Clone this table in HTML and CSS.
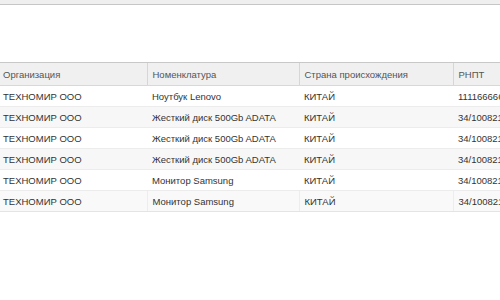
FILE: index.html
```html
<!DOCTYPE html>
<html lang="ru">
<head>
  <meta charset="UTF-8">
  <title>Номенклатура</title>
  <link rel="stylesheet" href="styles.css">
</head>
<body>

<div class="toolbar"></div>

<div class="grid-wrap">
  <table class="grid">
    <colgroup>
      <col class="c-org">
      <col class="c-item">
      <col class="c-country">
      <col class="c-rnpt">
    </colgroup>
    <thead>
      <tr>
        <th>Организация</th>
        <th>Номенклатура</th>
        <th>Страна происхождения</th>
        <th>РНПТ</th>
      </tr>
    </thead>
    <tbody>
      <tr>
        <td>ТЕХНОМИР ООО</td>
        <td>Ноутбук Lenovo</td>
        <td>КИТАЙ</td>
        <td>1111666666</td>
      </tr>
      <tr class="alt">
        <td>ТЕХНОМИР ООО</td>
        <td>Жесткий диск 500Gb ADATA</td>
        <td>КИТАЙ</td>
        <td>34/10082100</td>
      </tr>
      <tr>
        <td>ТЕХНОМИР ООО</td>
        <td>Жесткий диск 500Gb ADATA</td>
        <td>КИТАЙ</td>
        <td>34/10082100</td>
      </tr>
      <tr class="alt">
        <td>ТЕХНОМИР ООО</td>
        <td>Жесткий диск 500Gb ADATA</td>
        <td>КИТАЙ</td>
        <td>34/10082100</td>
      </tr>
      <tr>
        <td>ТЕХНОМИР ООО</td>
        <td>Монитор Samsung</td>
        <td>КИТАЙ</td>
        <td>34/10082100</td>
      </tr>
      <tr class="alt hover">
        <td>ТЕХНОМИР ООО</td>
        <td>Монитор Samsung</td>
        <td>КИТАЙ</td>
        <td>34/10082100</td>
      </tr>
    </tbody>
  </table>
</div>

</body>
</html>
```

FILE: styles.css
```css
* {
  box-sizing: border-box;
}

body {
  margin: 0;
  background: #fff;
  font-family: "Liberation Sans", Arial, sans-serif;
  font-size: 9.5px;
  color: #333;
  overflow: hidden;
}

.toolbar {
  height: 5px;
  background: #efefef;
  border-bottom: 1px solid #c6c6c6;
}

.grid-wrap {
  margin-top: 57px;
  width: 620px;
}

.grid {
  border-collapse: collapse;
  table-layout: fixed;
  width: 620px;
}

.c-org { width: 147px; }
.c-item { width: 152px; }
.c-country { width: 154px; }
.c-rnpt { width: 167px; }

.grid th {
  height: 23px;
  padding: 0 0 0 5px;
  background: #f0f0f0;
  color: #555;
  font-weight: normal;
  text-align: left;
  border-top: 1px solid #c8c8c8;
  border-bottom: 1px solid #d8d8d8;
  border-left: 1px solid #d6d6d6;
  white-space: nowrap;
}

.grid th:first-child {
  border-left: none;
  padding-left: 3px;
}

.grid td {
  height: 21px;
  padding: 0 0 0 5px;
  border-bottom: 1px solid #ececec;
  white-space: nowrap;
  overflow: hidden;
}

.grid td:first-child {
  padding-left: 3px;
}

.grid tr.alt td {
  background: #f7f7f7;
}

.grid tr.hover td {
  background: #f9f9f9;
  border-left: 1px solid #ededed;
  border-bottom: 1px solid #e4e4e4;
}

.grid tr.hover td:first-child {
  border-left: none;
}
```
